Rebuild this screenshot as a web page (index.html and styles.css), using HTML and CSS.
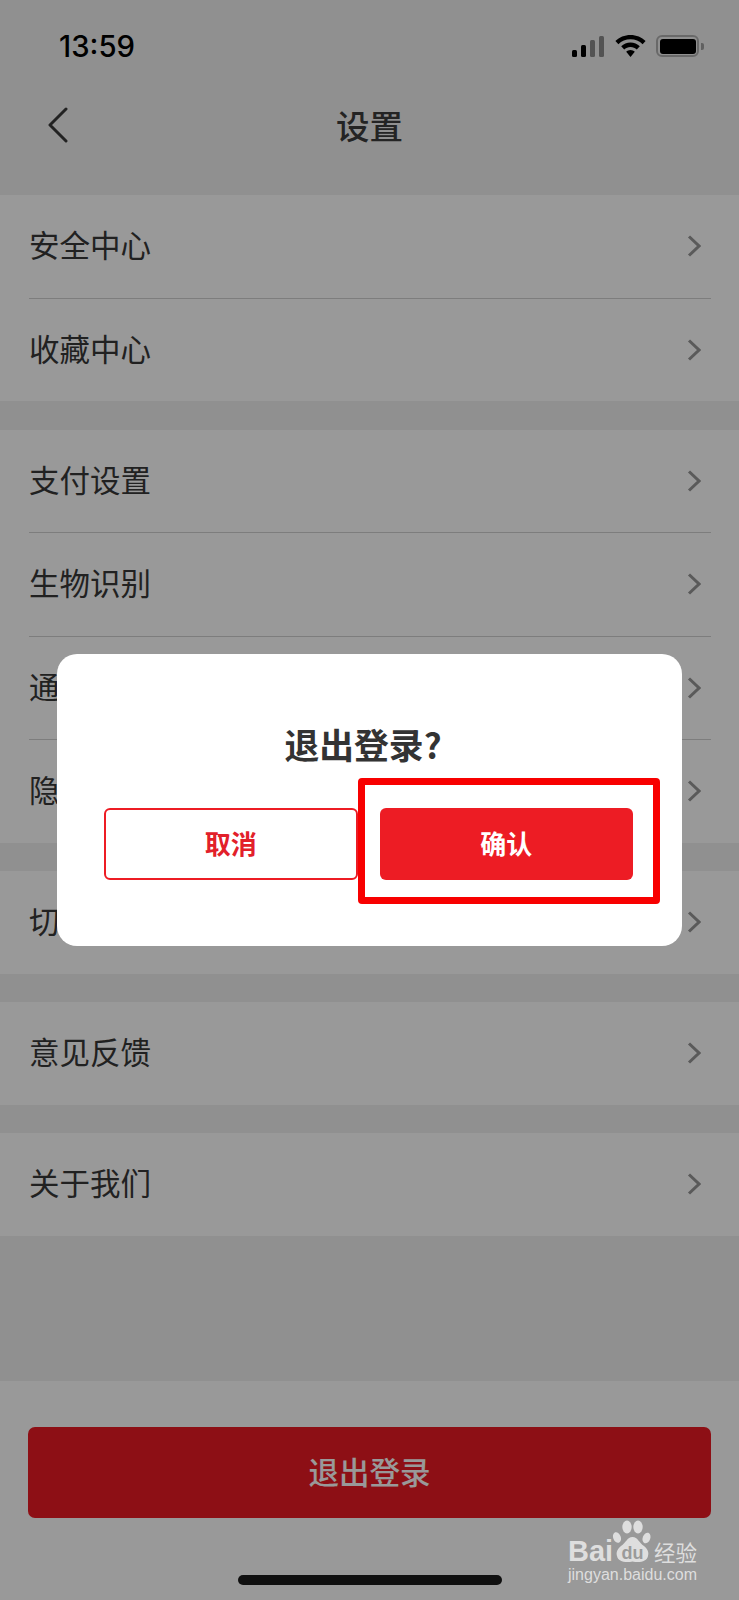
FILE: index.html
```html
<!DOCTYPE html>
<html lang="zh-CN">
<head>
<meta charset="utf-8">
<title>设置</title>
<link rel="stylesheet" href="styles.css">
</head>
<body>
<div class="page">
  <header class="head">
    <div class="status">
      <span class="time">13:59</span>
      <div class="status-icons">
        <div class="signal">
          <i class="bar b1"></i><i class="bar b2"></i><i class="bar b3 off"></i><i class="bar b4 off"></i>
        </div>
        <svg class="wifi" viewBox="0 0 31 22" width="31" height="22"><path d="M15.5 0C9.6 0 4.3 2.3.4 6.1l3 3.1C6.5 6.2 10.8 4.3 15.5 4.3s9 1.9 12.1 4.9l3-3.1C26.7 2.3 21.4 0 15.5 0z"/><path d="M15.5 7.6c-3.6 0-6.9 1.4-9.3 3.7l3 3.1c1.6-1.6 3.9-2.5 6.3-2.5s4.7.9 6.3 2.5l3-3.1c-2.4-2.3-5.7-3.7-9.3-3.7z"/><path d="M15.5 15c-1.7 0-3.2.7-4.3 1.8l4.3 5.2 4.3-5.2c-1.1-1.1-2.6-1.8-4.3-1.8z"/></svg>
        <div class="battery"><div class="battery-body"><div class="battery-fill"></div></div><i class="battery-nub"></i></div>
      </div>
    </div>
    <nav class="nav">
      <svg class="back" viewBox="0 0 22 36" width="22" height="36"><path d="M19 2 3 18l16 16" /></svg>
      <h1 class="title">设置</h1>
      <span></span>
    </nav>
  </header>

  <main class="lists">
    <section class="group">
      <div class="row"><span>安全中心</span><svg class="chev" viewBox="0 0 14 22"><path d="M2 1.5 12 11 2 20.5"/></svg></div>
      <div class="row"><span>收藏中心</span><svg class="chev" viewBox="0 0 14 22"><path d="M2 1.5 12 11 2 20.5"/></svg></div>
    </section>
    <section class="group">
      <div class="row"><span>支付设置</span><svg class="chev" viewBox="0 0 14 22"><path d="M2 1.5 12 11 2 20.5"/></svg></div>
      <div class="row"><span>生物识别</span><svg class="chev" viewBox="0 0 14 22"><path d="M2 1.5 12 11 2 20.5"/></svg></div>
      <div class="row"><span>通知设置</span><svg class="chev" viewBox="0 0 14 22"><path d="M2 1.5 12 11 2 20.5"/></svg></div>
      <div class="row"><span>隐私设置</span><svg class="chev" viewBox="0 0 14 22"><path d="M2 1.5 12 11 2 20.5"/></svg></div>
    </section>
    <section class="group">
      <div class="row"><span>切换语言</span><svg class="chev" viewBox="0 0 14 22"><path d="M2 1.5 12 11 2 20.5"/></svg></div>
    </section>
    <section class="group">
      <div class="row"><span>意见反馈</span><svg class="chev" viewBox="0 0 14 22"><path d="M2 1.5 12 11 2 20.5"/></svg></div>
    </section>
    <section class="group">
      <div class="row"><span>关于我们</span><svg class="chev" viewBox="0 0 14 22"><path d="M2 1.5 12 11 2 20.5"/></svg></div>
    </section>
  </main>

  <footer class="foot">
    <button class="logout">退出登录</button>
    <div class="home"></div>
  </footer>

  <div class="overlay">
    <div class="modal">
      <h2 class="modal-title">退出登录?</h2>
      <div class="modal-actions">
        <button class="btn btn-cancel">取消</button>
        <button class="btn btn-ok">确认</button>
      </div>
      <div class="annotation"></div>
    </div>
  </div>

  <div class="watermark">
    <div class="wm-top">
      <span class="wm-bai">Bai</span>
      <svg class="wm-paw" viewBox="0 0 40 46" width="40" height="46">
        <ellipse cx="15" cy="9" rx="4.7" ry="6.5"/>
        <ellipse cx="26" cy="9" rx="4.7" ry="6.5"/>
        <ellipse cx="5" cy="19.500" rx="3.800" ry="5.500" transform="rotate(-20 5 19.500)"/>
        <ellipse cx="34.500" cy="20" rx="3.800" ry="5.500" transform="rotate(20 34.500 20)"/>
        <path d="M20.500 19C26 19 27 25 32 28c4 3 5 7 4 10-1 5.500-8 7-15.500 5.500C13 45 6 43.500 5 38c-1-3 0-7 4-10 5-3 6-9 11.500-9z"/>
        <text class="wm-du" x="20.500" y="41" text-anchor="middle">du</text>
      </svg>
      <span class="wm-jy">经验</span>
    </div>
    <div class="wm-url">jingyan.baidu.com</div>
  </div>
</div>
</body>
</html>
```
FILE: styles.css
```css
* { box-sizing: border-box; }
html, body { margin: 0; padding: 0; }
body {
  width: 739px;
  height: 1600px;
  overflow: hidden;
  font-family: "Noto Sans CJK SC", "Noto Sans", sans-serif;
  background: #f0f0f0;
}
.page {
  position: relative;
  width: 739px;
  height: 1600px;
  display: flex;
  flex-direction: column;
}

/* header */
.head { height: 195px; background: #f0f0f0; flex: none; }
.status {
  height: 92px;
  padding: 0 35px 0 59px;
  display: flex;
  align-items: center;
  justify-content: space-between;
}
.time {
  font-family: Inter, "Liberation Sans", sans-serif;
  font-size: 29.300px;
  font-weight: 500;
  color: #000;
}
.status-icons { display: flex; align-items: center; }
.signal { display: flex; align-items: flex-end; gap: 4px; height: 21px; margin-right: 11px; }
.bar { display: block; width: 5px; background: #000; border-radius: 1.500px; }
.b1 { height: 7px; }
.b2 { height: 12px; }
.b3 { height: 17px; }
.b4 { height: 21px; }
.off { background: #8a8a8a; }
.wifi { display: block; fill: #000; margin-right: 10px; }
.battery { display: flex; align-items: center; }
.battery-body {
  width: 43px;
  height: 22px;
  border: 2px solid #b0b0b0;
  border-radius: 6px;
  padding: 1.500px;
}
.battery-fill { width: 100%; height: 100%; background: #000; border-radius: 3px; }
.battery-nub { display: block; width: 3px; height: 7px; margin-left: 2px; background: #a0a0a0; border-radius: 0 2px 2px 0; }

.nav {
  height: 66px;
  padding: 0 47px;
  display: grid;
  grid-template-columns: 1fr auto 1fr;
  align-items: center;
}
.back { display: block; fill: none; stroke: #3a3a3a; stroke-width: 3; stroke-linecap: round; stroke-linejoin: round; }
.title { margin: 0; font-size: 33.500px; font-weight: 500; line-height: 44px; color: #3c3c3c; }

/* list */
.lists { flex: 1; }
.group { background: #fff; margin-bottom: 28.500px; }
.row {
  position: relative;
  height: 102.500px;
  padding: 0 38px 0 29px;
  display: flex;
  align-items: center;
  justify-content: space-between;
  font-size: 30.500px;
  color: #383838;
}
.row span { margin-bottom: 4px; }
.row + .row { height: 103.500px; border-top: 1px solid #d0d0d0; margin-left: 29px; margin-right: 28px; padding-left: 0; padding-right: 10px; }
.chev { display: block; width: 14px; height: 22px; fill: none; stroke: #969696; stroke-width: 3; }

/* footer */
.foot {
  height: 219px;
  flex: none;
  background: #fff;
  padding: 46px 28px 0;
  display: flex;
  flex-direction: column;
  align-items: center;
}
.logout {
  width: 683px;
  height: 91px;
  flex: none;
  border: 0;
  border-radius: 7px;
  padding: 0 0 4px;
  background: #ec1a23;
  color: #fff;
  font-family: inherit;
  font-size: 30.500px;
  font-weight: 500;
}
.home { width: 264px; height: 10px; margin-top: 57px; border-radius: 5px; background: #1c1c1c; }

/* dialog */
.overlay {
  position: absolute;
  inset: 0;
  background: rgba(0, 0, 0, .4);
  display: flex;
  align-items: center;
  justify-content: center;
}
.modal {
  position: relative;
  width: 625px;
  height: 292px;
  padding: 68px 49px 0 47px;
  background: #fff;
  border-radius: 20px;
}
.modal-title {
  margin: 0 0 41px;
  padding-right: 11px;
  height: 45px;
  line-height: 45px;
  text-align: center;
  font-size: 34.800px;
  font-weight: 700;
  color: #333;
}
.modal-actions { display: grid; grid-template-columns: 1fr 1fr; gap: 22px; }
.btn {
  height: 72px;
  padding: 0 0 4px;
  border-radius: 6px;
  font-family: inherit;
  font-size: 26px;
  font-weight: 700;
}
.btn-cancel { background: #fff; border: 2px solid #ed1c24; color: #e2202a; }
.btn-ok { background: #ed1c24; border: 0; color: #fff; }
.annotation {
  position: absolute;
  left: 301px;
  top: 124px;
  width: 302px;
  height: 126px;
  border: 7px solid #f80000;
  border-radius: 4px;
}

/* watermark */
.watermark {
  position: absolute;
  left: 568px;
  top: 1518px;
  width: 134px;
  color: #dedede;
}
.wm-top { display: flex; align-items: flex-start; height: 46px; }
.wm-bai {
  font-family: "Liberation Sans", sans-serif;
  font-size: 29px;
  font-weight: 700;
  line-height: 29px;
  width: 44px;
  margin-top: 19px;
}
.wm-paw { display: block; fill: #dedede; flex: none; }
.wm-du { font-family: "Liberation Sans", sans-serif; font-size: 18px; font-weight: 700; fill: #9a9a9a; }
.wm-jy { font-size: 21.500px; line-height: 26px; margin: 21px 0 0 2px; white-space: nowrap; }
.wm-url {
  margin-top: 1px;
  font-family: "Liberation Sans", sans-serif;
  font-size: 16px;
  line-height: 20px;
  white-space: nowrap;
}
```
